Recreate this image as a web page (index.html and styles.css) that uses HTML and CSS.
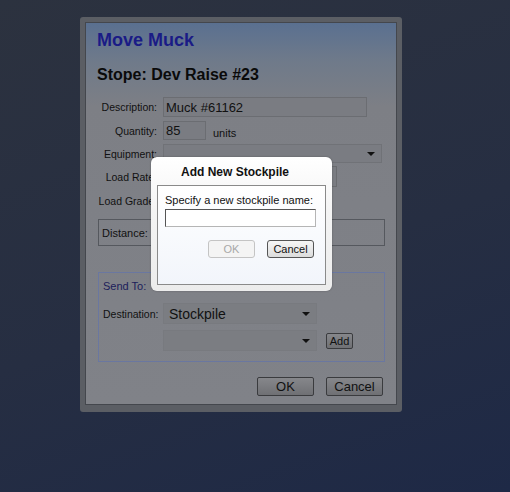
FILE: index.html
```html
<!DOCTYPE html>
<html lang="en">
<head>
    <meta charset="UTF-8">
    <title>Move Muck</title>
    <link rel="stylesheet" href="styles.css">
</head>
<body>
<div class="window">
    <div class="panel">
        <h1 class="title">Move Muck</h1>
        <h2 class="stope">Stope: Dev Raise #23</h2>

        <div class="row">
            <label class="lbl">Description:</label>
            <div class="field desc">Muck #61162</div>
        </div>
        <div class="row">
            <label class="lbl">Quantity:</label>
            <div class="field qty">85</div>
            <span class="units">units</span>
        </div>
        <div class="row">
            <label class="lbl">Equipment:</label>
            <div class="field select equip"><span class="arrow"></span></div>
        </div>
        <div class="row">
            <label class="lbl">Load Rate:</label>
            <div class="field rate"></div>
        </div>
        <div class="row grade-row">
            <label class="lbl">Load Grade:</label>
        </div>

        <div class="box distance">
            <span>Distance:</span>
        </div>

        <div class="box sendto">
            <div class="legend">Send To:</div>
            <div class="row">
                <label class="lbl dest">Destination:</label>
                <div class="field select dsel">Stockpile<span class="arrow"></span></div>
            </div>
            <div class="row">
                <span class="lbl dest"></span>
                <div class="field select dsel"><span class="arrow"></span></div>
                <button type="button" class="btn small">Add</button>
            </div>
        </div>

        <div class="actions">
            <button type="button" class="btn">OK</button>
            <button type="button" class="btn">Cancel</button>
        </div>
    </div>
</div>

<!-- modal -->
<div class="dialog">
    <div class="dialog-title">Add New Stockpile</div>
    <div class="dialog-body">
        <div class="prompt">Specify a new stockpile name:</div>
        <input type="text" class="name-input">
        <div class="dialog-buttons">
            <button type="button" class="dbtn disabled">OK</button>
            <button type="button" class="dbtn">Cancel</button>
        </div>
    </div>
</div>
</body>
</html>
```

FILE: styles.css
```css
/* dimmed page under the modal */
body {
    margin: 0;
    height: 492px;
    overflow: hidden;
    font-family: "Liberation Sans", Arial, sans-serif;
    background: linear-gradient(160deg, #2c323f 0%, #262e42 55%, #1e2946 100%);
    position: relative;
}
.window {
    margin: 17px 0 0 80px;
    width: 312px;
    height: 385px;
    padding: 5px;
    background-color: #5b5e64;
    border-radius: 3px;
}
.panel {
    height: 381px;
    border: 1px solid #44474d;
    background: linear-gradient(to bottom, #5a7090 0%, #6f7a8a 10%, #7d7f85 22%, #808288 100%);
    padding: 0 12px;
    box-sizing: content-box;
    width: 286px;
}
.title {
    margin: 6px 0 0 -1px;
    font-size: 18px;
    line-height: 22px;
    color: #1a1b86;
}
.stope {
    margin: 14px 0 12px -1px;
    font-size: 16px;
    line-height: 20px;
    color: #0a0a0a;
}
.row {
    display: flex;
    align-items: center;
    gap: 6px;
    margin-bottom: 4px;
}
.lbl {
    width: 59px;
    flex: none;
    text-align: right;
    font-size: 10.5px;
    color: #111;
    white-space: nowrap;
}
.field {
    box-sizing: border-box;
    background-color: #7a7c82;
    border: 1px solid #6b6d72;
    font-size: 13px;
    color: #111;
    padding-left: 2px;
    display: flex;
    align-items: center;
}
.desc { width: 204px; height: 20px; }
.qty { width: 43px; height: 19px; }
.units {
    font-size: 11px;
    color: #111;
    margin: 4px 0 0 1px;
}
.equip { width: 219px; height: 19px; border-color: #707277; }
.rate { width: 174px; height: 21px; margin-top: -1px; border-color: #6a6c70; }
.select {
    position: relative;
}
.arrow {
    position: absolute;
    right: 6px;
    top: 50%;
    margin-top: -2px;
    border-left: 4px solid transparent;
    border-right: 4px solid transparent;
    border-top: 4px solid #111;
}
.grade-row {
    height: 20px;
    margin-bottom: 8px;
}
.box {
    box-sizing: border-box;
    width: 287px;
    border: 1px solid #55585e;
}
.distance {
    height: 27px;
    display: flex;
    align-items: center;
    padding-left: 3px;
    font-size: 11px;
    color: #111;
}
.sendto {
    margin-top: 26px;
    height: 90px;
    border-color: #6a77a0;
    padding: 7px 4px 0;
}
.sendto .row {
    gap: 5px;
    margin-bottom: 6px;
}
.legend {
    font-size: 11px;
    color: #1c1d5a;
    margin-bottom: 11px;
}
.dest {
    width: 55px;
    text-align: left;
}
.dsel {
    width: 154px;
    height: 21px;
    background-color: #7b7d82;
    border-color: #787a7f;
    font-size: 14px;
    padding-left: 5px;
}
.btn {
    font-family: "Liberation Sans", Arial, sans-serif;
    font-size: 13px;
    color: #111;
    width: 57px;
    height: 19px;
    padding: 0;
    border: 1px solid #3a3b3e;
    border-radius: 2px;
    background: linear-gradient(to bottom, #86878b, #6f7074);
}
.btn.small {
    width: 27px;
    height: 16px;
    font-size: 11px;
    margin-left: 4px;
}
.actions {
    display: flex;
    justify-content: flex-end;
    gap: 12px;
    margin: 15px 1px 0 0;
}

/* add stockpile modal */
.dialog {
    position: absolute;
    left: 151px;
    top: 157px;
    width: 181px;
    height: 134px;
    box-sizing: border-box;
    padding: 0 6px 6px;
    border-radius: 6px;
    background: linear-gradient(to bottom, #ffffff 0%, #f4f4f4 40%, #ececec 100%);
    box-shadow: 0 0 2px rgba(0, 0, 0, 0.3);
    display: flex;
    flex-direction: column;
}
.dialog-title {
    height: 28px;
    line-height: 30px;
    padding-left: 24px;
    font-size: 12px;
    font-weight: bold;
    color: #111;
}
.dialog-body {
    flex: 1;
    border: 1px solid #8a8a8a;
    background: linear-gradient(to bottom, #ffffff, #f2f5fb);
    padding: 7px 8px 0 7px;
}
.prompt {
    font-size: 11px;
    color: #111;
    line-height: 14px;
}
.name-input {
    display: block;
    box-sizing: border-box;
    width: 151px;
    height: 18px;
    margin: 2px 0 0;
    border: 1px solid #b5b5b5;
    border-top-color: #555;
    border-left-color: #555;
    background-color: #fff;
}
.dialog-buttons {
    display: flex;
    justify-content: flex-end;
    gap: 12px;
    margin: 13px 3px 0 0;
}
.dbtn {
    font-family: "Liberation Sans", Arial, sans-serif;
    font-size: 11px;
    width: 47px;
    height: 18px;
    padding: 0;
    color: #111;
    border: 1px solid #555;
    border-radius: 3px;
    background: linear-gradient(to bottom, #f6f6f6, #dcdcdc);
}
.dbtn.disabled {
    color: #a8a8a8;
    border-color: #c4c4c4;
    background: #f4f4f4;
}
```
